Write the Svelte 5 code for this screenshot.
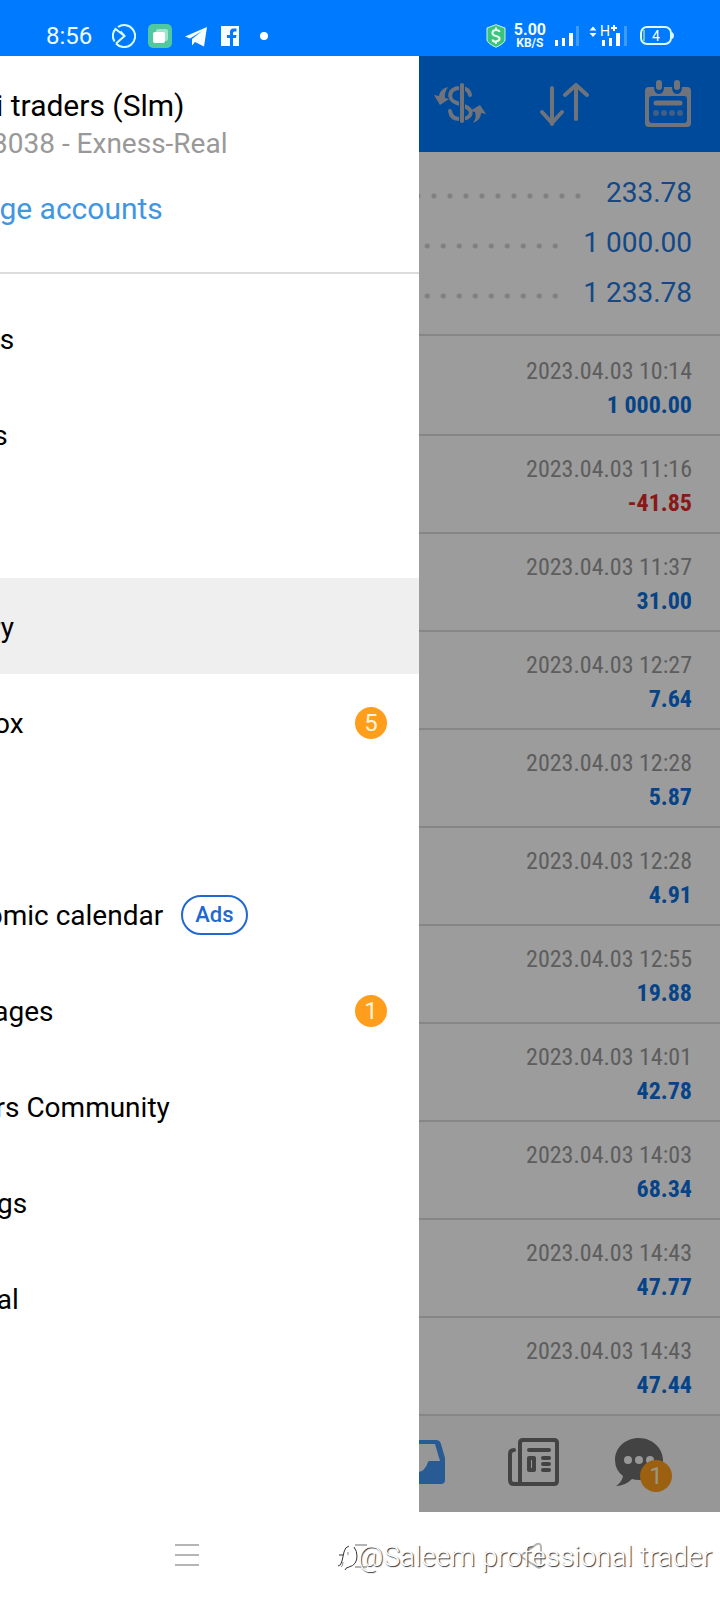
<script>
	const menu = [
		{ label: 'Quotes' },
		{ label: 'Charts' },
		{ label: 'Trade' },
		{ label: 'History', active: true },
		{ label: 'Mailbox', count: 5 },
		{ label: 'News' },
		{ label: 'Economic calendar', ads: true },
		{ label: 'Messages', count: 1 },
		{ label: 'Traders Community' },
		{ label: 'Settings' },
		{ label: 'Journal' }
	]

	const totals = ['233.78', '1 000.00', '1 233.78']

	const deals = [
		{ time: '10:14', value: '1 000.00' },
		{ time: '11:16', value: '-41.85' },
		{ time: '11:37', value: '31.00' },
		{ time: '12:27', value: '7.64' },
		{ time: '12:28', value: '5.87' },
		{ time: '12:28', value: '4.91' },
		{ time: '12:55', value: '19.88' },
		{ time: '14:01', value: '42.78' },
		{ time: '14:03', value: '68.34' },
		{ time: '14:43', value: '47.77' },
		{ time: '14:43', value: '47.44' }
	]
</script>

<div class="status">
	<div class="status-group">
		<time>8:56</time>
		<svg width="24" height="24" viewBox="0 0 24 24" fill="none" stroke="#d9fbff" stroke-width="2">
			<path d="M6 3A11 11 0 1 1 4 19.500M2.500 17.500A11 11 0 0 1 3.500 5L12.500 12 4 19.500M8.500 7.500l4 4.500" />
		</svg>
		<svg width="24" height="24" viewBox="0 0 24 24">
			<rect width="24" height="24" rx="5" fill="#50c8a0" />
			<rect x="8" y="5" width="12" height="12" rx="2" fill="#9ee5cc" />
			<rect x="5" y="8" width="12" height="11" rx="2" fill="#fff" />
		</svg>
		<svg width="24" height="24" viewBox="0 0 24 24" fill="#f4feff">
			<path d="M1 12.500L23 3l-3 19.500L11 18l-3 3.500V15L18 7 6 14.500z" />
		</svg>
		<svg width="20" height="20" viewBox="0 0 20 20">
			<path fill="#f4feff" d="M1 0h18v20h-6v-8h3l.5-3H13V7q0-1.500 1.500-1.500h2V2.500h-3Q10 2.500 10 6v3H7v3h3v8H1z" />
		</svg>
		<i class="dot"></i>
	</div>
	<div class="status-group tight">
		<svg width="20" height="24" viewBox="0 0 20 24">
			<path fill="#3cc47c" stroke="#c8f5e0" stroke-width="1" d="M10 .7l9 3.300v12q0 3-9 7.300-9-4.300-9-7.300V4z" />
			<path fill="none" stroke="#e8fff4" stroke-width="2" d="M13.500 8q-.5-2-3.500-2T6.500 8.500 10 12t3.500 3-3.500 2.500T6.500 15.500M10 3.500V6M10 17.500V20" />
		</svg>
		<div class="speed"><b>5.00</b><b class="unit">KB/S</b></div>
		<svg width="26" height="24" viewBox="0 0 26 24" fill="#fff">
			<path d="M1 16h3v6H1zM8 14h3v8H8zM15 9h4v13h-4z" />
			<path fill="#3d9aff" d="M22 2h3v20h-3z" />
		</svg>
		<svg class="network" width="40" height="24" viewBox="0 0 40 24" fill="#fff">
			<path d="M5 2.500l3.500 4h-7zM5 13l3.500-4h-7z" />
			<text x="12" y="12" font-size="14">H</text>
			<path d="M25 1h2v2h2v2h-2v2h-2V5h-2V3h2zM14 16h3v6h-3zM21 14h3v8h-3zM28 9h4v13h-4z" />
			<path fill="#3d9aff" d="M36 2h3v20h-3z" />
		</svg>
		<svg class="battery" width="34" height="20" viewBox="0 0 34 20">
			<rect x="1" y="1" width="30" height="17" rx="6" fill="none" stroke="#d9fbff" stroke-width="2" />
			<path fill="#d9fbff" d="M32 6q2 1 2 3.500T32 13z" />
			<path stroke="#78bfa8" stroke-width="2" d="M4 4v11" />
			<text x="16" y="15" text-anchor="middle" font-size="14" fill="#fff">4</text>
		</svg>
	</div>
</div>

<div class="app">
	<main>
		<header>
			<button aria-label="Symbol">
				<svg viewBox="0 0 56 56" fill="none" stroke="#b8bec8" stroke-width="4" stroke-linecap="round" stroke-linejoin="round">
					<path d="M38 19q-1-7-10-7c-12 0-13 12-3 15l7 3c11 4 8 13-4 13q-9 0-10-8" />
					<path stroke="#007aff" stroke-width="6" stroke-linecap="butt" d="M30 8v39" />
					<path d="M30 9v36" />
					<g fill="#b8bec8" stroke="none">
						<path d="M16 11Q8 13 7 20l-5-1 6 10 9-6-4-1q-1-5 3-11z" />
						<path d="M41 47q8-3 8-10l5 1-6-9-10 6 5 1q2 6-2 11z" />
					</g>
				</svg>
			</button>
			<button aria-label="Sort">
				<svg viewBox="0 0 56 56" fill="none" stroke="#b8bec8" stroke-width="4" stroke-linecap="round" stroke-linejoin="round">
					<path d="M16 12v36M6 36l10 11 10-11M40 43V9M29 19L40 9l11 10" />
				</svg>
			</button>
			<button aria-label="Period">
				<svg viewBox="0 0 56 56">
					<path fill="#b8bec8" fill-rule="evenodd" d="M9 11h5q0 7 5 7t5-7h8q0 7 5 7t5-7h5q4 0 4 4v32q0 4-4 4H9q-4 0-4-4V15q0-4 4-4zM12 20q-3 0-3 3v21q0 3 3 3h32q3 0 3-3V23q0-3-3-3z" />
					<rect x="16" y="4" width="6" height="10" rx="3" fill="#b8bec8" />
					<rect x="34" y="4" width="6" height="10" rx="3" fill="#b8bec8" />
					<path stroke="#b8bec8" stroke-width="5" stroke-linecap="round" d="M16 27h24" />
					<path stroke="#6e9ad8" stroke-width="6" stroke-linecap="round" stroke-dasharray="0 8" d="M16 37h25" />
				</svg>
			</button>
		</header>

		<section class="totals">
			{#each totals as total}
				<div class="total"><i class="leader"></i><span>{total}</span></div>
			{/each}
		</section>

		<section class="deals">
			{#each deals as deal}
				<div class="deal">
					<span class="date">2023.04.03 {deal.time}</span>
					<b class:loss={deal.value.startsWith('-')}>{deal.value}</b>
				</div>
			{/each}
		</section>

		<nav class="tabs">
			<button aria-label="History">
				<svg viewBox="0 0 56 56">
					<path fill="#4296f0" fill-rule="evenodd" d="M-4 4h41q4 0 5 4l4 14v22q0 4-4 4H-4zM2 8L-2 26h10q2 10 10 10t11-10q0-1 2-1h10L36 8z" />
				</svg>
			</button>
			<button aria-label="News">
				<svg viewBox="0 0 56 56" fill="none" stroke="#6e6e6e" stroke-width="4" stroke-linecap="round" stroke-linejoin="round">
					<path d="M17 4h32q3 0 3 3v38q0 3-3 3H9q-4 0-4-4V18q0-4 4-4M15 48V7q0-3 3-3" />
					<path d="M24 14h20M38 22h6M38 28h6M38 34h6M24 22h5v12h-5z" />
				</svg>
			</button>
			<button aria-label="Messages">
				<svg viewBox="0 0 56 56">
					<path fill="#6e6e6e" d="M28 2C14 2 4 12 4 24q0 10 8 16-1 6-7 10 9 0 16-7 3 1 7 1c14 0 24-9 24-20S42 2 28 2z" />
					<g fill="#f7f7f7">
						<circle cx="17" cy="24" r="4" /><circle cx="28" cy="24" r="4" /><circle cx="39" cy="24" r="4" />
					</g>
				</svg>
				<span class="count tab-count">1</span>
			</button>
		</nav>
	</main>

	<div class="scrim"></div>

	<!-- half way through sliding in, so its left part is off screen -->
	<aside>
		<div class="account">
			<div class="name">i traders (Slm)</div>
			<div class="server">3038 - Exness-Real</div>
			<a href="#accounts">Manage accounts</a>
		</div>
		<nav class="menu">
			{#each menu as item}
				<a href="#{item.label}" class:active={item.active}>
					{item.label}
					{#if item.ads}<span class="ads">Ads</span>{/if}
					{#if item.count}<span class="count">{item.count}</span>{/if}
				</a>
			{/each}
		</nav>
	</aside>
</div>

<footer>
	<button aria-label="Recent apps">
		<svg viewBox="0 0 24 24" stroke="#b5b5b5" stroke-width="2"><path d="M0 1h24M0 11h24M0 21h24" /></svg>
	</button>
	<button aria-label="Home">
		<svg viewBox="0 0 24 24" fill="none" stroke="#b5b5b5" stroke-width="2"><path d="M7 1h12M7 23h12" /></svg>
	</button>
	<button aria-label="Back">
		<svg viewBox="0 0 24 24" fill="none" stroke="#b5b5b5" stroke-width="2"><path d="M2 10L16 0q4-1 4 3v18q0 4-4 2L2 14q-3-2 0-4z" /></svg>
	</button>
	<div class="watermark">
		<svg width="22" height="28" viewBox="0 0 22 28" fill="none" stroke="#333" stroke-width="1">
			<path d="M2 23q3 0 4-5l2-9q1-5 5-6M3 12h4M18 4q3 4 3 9 0 9-8 11-4 1-4 3" />
			<path stroke="#888" d="M12 9v3M5 24q2-1 2-5" />
		</svg>
		<span>@Saleem professional trader</span>
	</div>
</footer>

<style>
	:global(body) {
		margin: 0;
		background: #fff;
	}

	:global(#app) {
		font-family: Roboto, "Noto Sans", sans-serif;
		font-size: 28px;
	}

	a {
		color: inherit;
		text-decoration: none;
	}

	button {
		background: none;
		border: 0;
		font: inherit;
		padding: 0;
	}

	svg {
		display: block;
		flex: none;
	}

	.status {
		align-items: center;
		background: #007aff;
		box-sizing: border-box;
		color: #effcff;
		display: flex;
		height: 56px;
		justify-content: space-between;
		padding: 16px 46px 0;
	}

	.status-group {
		align-items: center;
		display: flex;
		gap: 12px;
	}

		.status-group.tight {
			gap: 8px;
		}

	time {
		font-size: 24px;
		margin-right: 8px;
	}

	.dot {
		background: #fff;
		border-radius: 50%;
		height: 8px;
		margin-left: 8px;
		width: 8px;
	}

	.speed {
		display: flex;
		flex-direction: column;
		font-size: 16px;
		line-height: 14px;
		text-align: center;
	}

	.unit {
		font-size: 12px;
		line-height: 12px;
	}

	.network {
		overflow: visible;
	}

	.battery {
		margin-left: 4px;
	}

	.app {
		display: grid;
		overflow: hidden;
	}

	main, .scrim, aside {
		grid-area: 1 / 1;
		min-width: 0;
	}

	.scrim {
		background: rgba(0, 0, 0, 0.39);
		z-index: 1;
	}

	header {
		align-items: center;
		background: #007aff;
		display: flex;
		gap: 48px;
		height: 96px;
		justify-content: flex-end;
		padding-right: 24px;
	}

		header svg, .tabs svg {
			height: 56px;
			width: 56px;
		}

	.totals {
		border-bottom: 2px solid #dcdcdc;
		color: #2277dd;
		padding: 15px 28px 17px;
	}

	.total {
		align-items: center;
		display: flex;
		gap: 20px;
		height: 50px;
	}

	.leader {
		background: radial-gradient(circle, #d0d0d0 2px, transparent 3px) right center / 16px 16px repeat-x;
		flex: 1;
		height: 16px;
		margin-top: 8px;
	}

	.deals {
		padding-top: 2px;
	}

	.deal {
		border-bottom: 2px solid #dcdcdc;
		display: flex;
		flex-direction: column;
		font-family: "Roboto Condensed", "Liberation Sans Narrow", Roboto, sans-serif;
		font-size: 24px;
		line-height: 34px;
		padding: 16px 28px 12px;
		text-align: right;
	}

	.date {
		color: #999;
	}

	.deal b {
		color: #0a70dd;
	}

		.deal b.loss {
			color: #e02828;
		}

	.tabs {
		background: #f7f7f7;
		display: flex;
		height: 96px;
		justify-content: flex-end;
		padding-right: 28px;
	}

		.tabs button {
			align-items: center;
			display: flex;
			justify-content: center;
			position: relative;
			width: 106px;
		}

	.count {
		background: #ff9d1c;
		border-radius: 50%;
		color: #fff4d8;
		font-size: 24px;
		height: 32px;
		line-height: 32px;
		text-align: center;
		width: 32px;
	}

	.tab-count {
		bottom: 20px;
		position: absolute;
		right: 20px;
	}

	aside {
		--slide: 176px;
		background: #fff;
		color: #000;
		margin-left: calc(var(--slide) * -1);
		width: calc(58.2vw + var(--slide));
		z-index: 2;
	}

	.account {
		border-bottom: 2px solid #dcdcdc;
		box-sizing: border-box;
		display: flex;
		flex-direction: column;
		height: 218px;
		line-height: 38px;
		padding: 31px 0 0 100px;
	}

	.name {
		font-size: 30px;
		padding-left: 72px;
	}

	.server {
		color: #999;
		padding-left: 68px;
	}

	.account a {
		color: #4296e0;
		font-size: 30px;
		margin-top: 27px;
	}

	.menu {
		padding-top: 16px;
	}

		.menu a {
			align-items: center;
			box-sizing: border-box;
			display: flex;
			height: 96px;
			padding: 2px 32px 0 101px;
		}

		.menu a.active {
			background: #efefef;
		}

		.menu .count {
			margin-left: auto;
		}

	.ads {
		border: 2px solid #2168d0;
		border-radius: 20px;
		color: #2168d0;
		font-size: 22px;
		font-weight: 500;
		line-height: 36px;
		margin-left: 18px;
		padding: 0 12px;
	}

	footer {
		align-items: center;
		display: grid;
		grid-template-columns: repeat(3, 1fr);
		height: 88px;
		justify-items: center;
		padding: 0 14%;
		position: relative;
	}

		footer button svg {
			height: 24px;
			overflow: visible;
			width: 24px;
		}

	.watermark {
		align-items: center;
		color: #fff;
		display: flex;
		font-size: 28px;
		font-weight: 300;
		position: absolute;
		right: 8px;
		text-shadow: 1px 1px 1px #333;
		top: 28px;
	}
</style>
